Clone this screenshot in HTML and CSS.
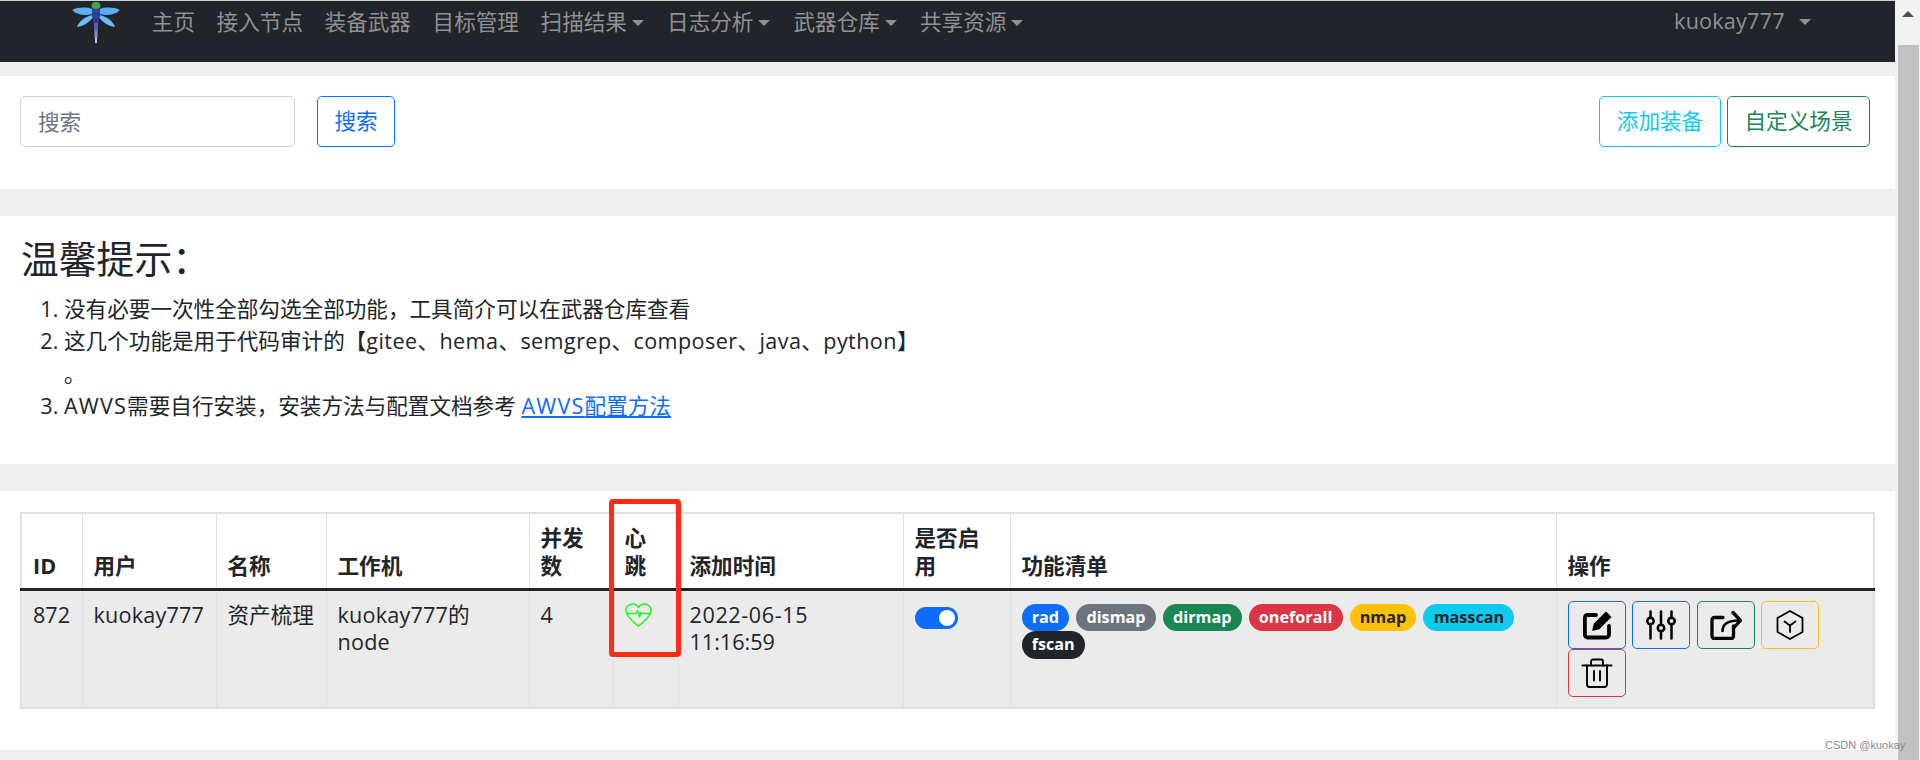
FILE: index.html
```html
<!DOCTYPE html>
<html lang="zh-CN">
<head>
    <meta charset="UTF-8">
    <title>装备武器</title>
    <link rel="stylesheet" href="styles.css">
</head>
<body>
    <div class="page">
        <nav class="navbar">
            <svg class="logo" viewBox="0 0 48 42">
                <path d="M0 9C6 6 15 6 20 8V13C13 15 5 14 0 9Z" fill="#5aaef5"/>
                <path d="M48 9C42 6 33 6 28 8V13C35 15 43 14 48 9Z" fill="#5aaef5"/>
                <path d="M5 26C7 20 13 16 20 14L21 16C18 21 12 25 5 26Z" fill="#6dbcf7"/>
                <path d="M43 26C41 20 35 16 28 14L27 16C30 21 36 25 43 26Z" fill="#6dbcf7"/>
                <ellipse cx="24" cy="4.5" rx="4.5" ry="3.5" fill="#3fa648"/>
                <rect x="20" y="8" width="8" height="8" fill="#2a3ea8"/>
                <rect x="21" y="16" width="6" height="6" fill="#2c3590"/>
                <rect x="22" y="22" width="4" height="8" fill="#5a62b4"/>
                <rect x="22.5" y="30" width="3" height="7" fill="#8a8fd0"/>
                <rect x="23" y="37" width="2" height="5" fill="#bcbde6"/>
            </svg>
            <a class="nav-link" href="#">主页</a>
            <a class="nav-link" href="#">接入节点</a>
            <a class="nav-link" href="#">装备武器</a>
            <a class="nav-link" href="#">目标管理</a>
            <a class="nav-link caret" href="#">扫描结果</a>
            <a class="nav-link caret" href="#">日志分析</a>
            <a class="nav-link caret" href="#">武器仓库</a>
            <a class="nav-link caret" href="#">共享资源</a>
            <a class="nav-link caret nav-user" href="#">kuokay777</a>
        </nav>

        <section class="card card-search">
            <input class="search-input" type="text" placeholder="搜索">
            <button class="btn btn-primary btn-search">搜索</button>
            <button class="btn btn-info btn-add">添加装备</button>
            <button class="btn btn-success">自定义场景</button>
        </section>

        <section class="card card-tips">
            <h3>温馨提示：</h3>
            <ol>
                <li>没有必要一次性全部勾选全部功能，工具简介可以在武器仓库查看</li>
                <li>这几个功能是用于代码审计的【<span class="latin">gitee、hema、semgrep、composer、java、python</span>】<br>。</li>
                <li><span class="caps">AWVS</span>需要自行安装，安装方法与配置文档参考 <a href="#"><span class="caps">AWVS</span>配置方法</a></li>
            </ol>
        </section>

        <section class="card card-table">
            <table>
                <colgroup>
                    <col class="col-id">
                    <col class="col-user">
                    <col class="col-name">
                    <col class="col-node">
                    <col class="col-count">
                    <col class="col-beat">
                    <col class="col-time">
                    <col class="col-on">
                    <col class="col-list">
                    <col class="col-ops">
                </colgroup>
                <thead>
                    <tr>
                        <th>ID</th>
                        <th>用户</th>
                        <th>名称</th>
                        <th>工作机</th>
                        <th>并发数</th>
                        <th>心跳</th>
                        <th>添加时间</th>
                        <th>是否启用</th>
                        <th>功能清单</th>
                        <th>操作</th>
                    </tr>
                </thead>
                <tbody>
                    <tr>
                        <td>872</td>
                        <td class="cell-latin">kuokay777</td>
                        <td>资产梳理</td>
                        <td class="cell-latin">kuokay777的node</td>
                        <td>4</td>
                        <td>
                            <svg class="heart" viewBox="0 0 27 24" fill="none" stroke="#2cf02c" stroke-width="1.5" stroke-linejoin="round">
                                <path d="M13.5 23C9 19.5 1 14 1 7.5 1 3.5 4 1 7.5 1 10 1 12.5 2.5 13.5 4.5 14.5 2.5 17 1 19.5 1 23 1 26 3.5 26 7.5 26 14 18 19.5 13.5 23Z"/>
                                <path d="M1.5 10.5H11L12.5 7.5 14.5 14 16 9.5 17 10.5H25.5"/>
                            </svg>
                        </td>
                        <td><span class="date">2022-06-15</span> 11:16:59</td>
                        <td><input class="switch" type="checkbox" checked></td>
                        <td>
                            <div class="badges">
                                <span class="badge bg-primary">rad</span>
                                <span class="badge bg-secondary">dismap</span>
                                <span class="badge bg-success">dirmap</span>
                                <span class="badge bg-danger">oneforall</span>
                                <span class="badge bg-warning">nmap</span>
                                <span class="badge bg-info">masscan</span>
                                <span class="badge bg-dark">fscan</span>
                            </div>
                        </td>
                        <td>
                            <div class="ops">
                                <button class="op op-primary">
                                    <svg viewBox="0 0 32 30" fill="none" stroke="#000" stroke-width="3.8" stroke-linecap="round" stroke-linejoin="round">
                                        <path d="M15 5H6.5A3 3 0 0 0 3.9 8V24.5A3 3 0 0 0 6.5 27.5H25A3 3 0 0 0 28 24.5V16"/>
                                        <path d="M12 20L13.5 14 25 2.5 29.5 7 18 18.5Z" fill="#000" stroke-width="1.5"/>
                                    </svg>
                                </button>
                                <button class="op op-primary">
                                    <svg viewBox="0 0 32 30" fill="none" stroke="#000" stroke-width="2.5" stroke-linecap="round">
                                        <path d="M5.5 1.5V8M5.5 14V28.5M16 1.5V15M16 21V28.5M26.5 1.5V8M26.5 14V28.5"/>
                                        <circle cx="5.5" cy="11" r="3.2"/>
                                        <circle cx="16" cy="18" r="3.2"/>
                                        <circle cx="26.5" cy="11" r="3.2"/>
                                    </svg>
                                </button>
                                <button class="op op-success">
                                    <svg viewBox="0 0 32 30" fill="none" stroke="#000" stroke-width="3.3" stroke-linecap="round" stroke-linejoin="round">
                                        <path d="M13 7.5H4.5A2.5 2.5 0 0 0 2 10V26A2.5 2.5 0 0 0 4.5 28.5H21A2.5 2.5 0 0 0 23.5 26V16"/>
                                        <path d="M12.5 21C12.5 14.5 17.5 10.5 29 10.5" stroke-width="2.6"/>
                                        <path d="M23 2.5L30.5 10.5 24 17.5"/>
                                    </svg>
                                </button>
                                <button class="op op-warning">
                                    <svg viewBox="0 0 32 30" fill="none" stroke="#000" stroke-width="1.8" stroke-linejoin="round">
                                        <path d="M16 1L28.5 8V22L16 29 3.5 22V8Z"/>
                                        <path d="M10.5 11.5L16 15.5 21.5 11.5M16 15.5V22" stroke-linecap="round"/>
                                    </svg>
                                </button>
                                <button class="op op-danger">
                                    <svg viewBox="0 0 32 30" fill="none" stroke="#000" stroke-width="1.9" stroke-linecap="round" stroke-linejoin="round">
                                        <path d="M1.5 7.5H30.5"/>
                                        <path d="M10 7.5V3.5A2 2 0 0 1 12 1.5H20A2 2 0 0 1 22 3.5V7.5"/>
                                        <path d="M6 7.5V26.5A2.5 2.5 0 0 0 8.5 29H23.5A2.5 2.5 0 0 0 26 26.5V7.5"/>
                                        <path d="M13 13V22.5M19 13V22.5"/>
                                    </svg>
                                </button>
                            </div>
                        </td>
                    </tr>
                </tbody>
            </table>
            <div class="beat-mark"></div>
        </section>
    </div>

    <div class="scrollbar">
        <span class="scroll-arrow"></span>
        <div class="scroll-thumb"></div>
    </div>

    <div class="watermark">CSDN @kuokay</div>
</body>
</html>
```

FILE: styles.css
```css
html {
    font-size: 21.6px;
}
body {
    margin: 0;
    height: 760px;
    display: flex;
    overflow: hidden;
    background-color: #f1f1f1;
    color: #212529;
    font-family: "Open Sans", "Noto Sans CJK SC", sans-serif;
    line-height: 1.5;
}
.page {
    width: 1895px;
    flex: none;
    background-color: #eeeeee;
}

/* navbar */
.navbar {
    height: 61px;
    border-top: 1px solid #d0d0d0;
    background-color: #212529;
    display: flex;
    align-items: flex-start;
    padding-left: 72px;
}
.logo {
    width: 48px;
    height: 42px;
    flex: none;
    margin-right: 21px;
}
.nav-link {
    color: #8f9193;
    text-decoration: none;
    padding: 5px 10.8px 0;
    white-space: nowrap;
    line-height: 32px;
}
.caret {
    padding-right: 12.3px;
}
.caret::after {
    content: "";
    display: inline-block;
    margin-left: 5px;
    vertical-align: 4px;
    border-top: 6.5px solid currentColor;
    border-left: 6.5px solid transparent;
    border-right: 6.5px solid transparent;
}
.nav-user {
    margin-left: auto;
    margin-right: 72px;
    padding-top: 4px;
    letter-spacing: .2px;
}
.nav-user::after {
    margin-left: 14px;
}

/* cards */
.card {
    background-color: #fff;
    position: relative;
}
.card-search {
    margin-top: 14px;
    height: 113px;
    box-sizing: border-box;
    padding: 20px 25px 0 20px;
    display: flex;
    align-items: flex-start;
}
.card-tips {
    margin-top: 27px;
    height: 248px;
    box-sizing: border-box;
    padding: 20px 21px 0;
}
.card-table {
    margin-top: 27px;
    height: 259px;
    box-sizing: border-box;
    padding: 21px 20px 0;
}

/* search row */
.search-input {
    width: 275px;
    height: 51px;
    box-sizing: border-box;
    padding: 0 17px;
    border: 1px solid #ced4da;
    border-radius: 5px;
    font: inherit;
    outline: none;
}
.search-input::placeholder {
    color: #6c757d;
}
.btn {
    height: 51px;
    box-sizing: border-box;
    padding: 0 16px;
    background: transparent;
    border: 1px solid;
    border-radius: 5px;
    font: inherit;
    white-space: nowrap;
}
.btn-primary {
    color: #0d6efd;
    border-color: #0d6efd;
}
.btn-info {
    color: #0dcaf0;
    border-color: #0dcaf0;
}
.btn-success {
    color: #198754;
    border-color: #198754;
}
.btn-search {
    margin-left: 22px;
    width: 78px;
}
.btn-add {
    margin-left: auto;
    margin-right: 6px;
    width: 122px;
}
.btn-add + .btn {
    width: 143px;
}

/* tips */
h3 {
    margin: 0;
    font-size: 37.8px;
    font-weight: 400;
    line-height: 45px;
}
ol {
    margin: 12px 0 0;
    padding-left: 43px;
}
li {
    line-height: 32.4px;
}
li a {
    color: #0d6efd;
}
.latin {
    letter-spacing: .4px;
}
.caps {
    letter-spacing: 1.2px;
}

/* table */
table {
    width: 1855px;
    table-layout: fixed;
    border-collapse: collapse;
    line-height: 27.5px;
    border: 2px solid #dee2e6;
}
th, td {
    padding: 10px 11px;
    border: 1px solid #dee2e6;
    vertical-align: top;
    text-align: left;
}
th {
    vertical-align: bottom;
    font-weight: 700;
    padding-bottom: 8.5px;
    border-bottom: 3px solid #212529;
}
tbody tr {
    background-color: #ebebeb;
}
.cell-latin {
    letter-spacing: .2px;
}
.date {
    letter-spacing: .6px;
}
.col-id { width: 61px; }
.col-user { width: 134px; }
.col-name { width: 110px; }
.col-node { width: 203px; }
.col-count { width: 84px; }
.col-beat { width: 65px; }
.col-time { width: 225px; }
.col-on { width: 107px; }
.col-list { width: 546px; }

.heart {
    display: block;
    width: 27px;
    height: 24px;
    margin-top: 2px;
}
.switch {
    appearance: none;
    display: block;
    width: 43px;
    height: 22px;
    margin: 6px 0 0;
    border-radius: 11px;
    background-color: #0d6efd;
    position: relative;
}
.switch::after {
    content: "";
    position: absolute;
    top: 3px;
    right: 3px;
    width: 16px;
    height: 16px;
    border-radius: 50%;
    background-color: #fff;
}
.badges {
    display: flex;
    flex-wrap: wrap;
    gap: 0 7px;
    margin-top: 3px;
}
.badge {
    height: 27.5px;
    padding: 0 10.2px;
    border-radius: 14px;
    color: #fff;
    font-size: 16.2px;
    font-weight: 700;
    line-height: 27px;
}
.bg-primary { background-color: #0d6efd; }
.bg-secondary { background-color: #6c757d; }
.bg-success { background-color: #198754; }
.bg-danger { background-color: #dc3545; }
.bg-warning { background-color: #ffc107; color: #212529; }
.bg-info { background-color: #0dcaf0; color: #212529; }
.bg-dark { background-color: #212529; }

.ops {
    display: flex;
    flex-wrap: wrap;
    gap: 0 6.5px;
}
.op {
    width: 58px;
    height: 48px;
    padding: 0;
    background: transparent;
    border: 1px solid;
    border-radius: 5px;
    display: flex;
    align-items: center;
    justify-content: center;
}
.op svg {
    width: 32px;
    height: 30px;
}
.op-primary { border-color: #0d6efd; }
.op-success { border-color: #198754; }
.op-warning { border-color: #ffc107; }
.op-danger { border-color: #dc3545; }

/* red annotation drawn over the screenshot */
.beat-mark {
    position: absolute;
    left: 609px;
    top: 8px;
    width: 72px;
    height: 158px;
    box-sizing: border-box;
    border: 5px solid #ff2a17;
    border-radius: 4px;
}

/* scrollbar */
.scrollbar {
    flex: 1;
    display: flex;
    flex-direction: column;
    align-items: center;
    padding-left: 1px;
}
.scroll-arrow {
    margin-top: 11px;
    border-bottom: 6px solid #505050;
    border-left: 6px solid transparent;
    border-right: 6px solid transparent;
}
.scroll-thumb {
    width: 21px;
    flex: 1;
    margin-top: 28px;
    background-color: #c1c1c1;
}

.watermark {
    position: absolute;
    left: 1825px;
    top: 737px;
    color: #8a8a8a;
    font-family: "Liberation Sans", sans-serif;
    font-size: 11px;
    line-height: 16px;
}
```
